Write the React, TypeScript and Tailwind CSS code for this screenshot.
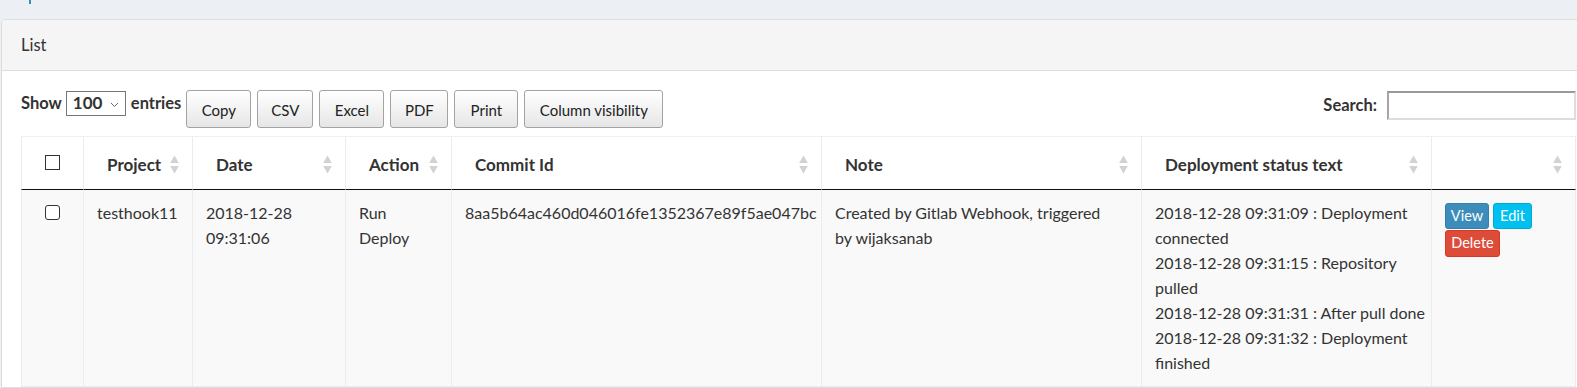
import React from "react";

type Col = { label: string; width: string; sort: boolean };

const COLS: Col[] = [
  { label: "", width: "w-[63px]", sort: false },
  { label: "Project", width: "w-[109px]", sort: true },
  { label: "Date", width: "w-[153px]", sort: true },
  { label: "Action", width: "w-[106px]", sort: true },
  { label: "Commit Id", width: "w-[370px]", sort: true },
  { label: "Note", width: "w-[320px]", sort: true },
  { label: "Deployment status text", width: "w-[290px]", sort: true },
  { label: "", width: "w-[144px]", sort: true },
];

const TOOL_BUTTONS = [
  { label: "Copy", width: "w-[65px]" },
  { label: "CSV", width: "w-[56px]" },
  { label: "Excel", width: "w-[65px]" },
  { label: "PDF", width: "w-[58px]" },
  { label: "Print", width: "w-[64px]" },
  { label: "Column visibility", width: "w-[139px]" },
];

const STATUS_LINES = [
  "2018-12-28 09:31:09 : Deployment",
  "connected",
  "2018-12-28 09:31:15 : Repository",
  "pulled",
  "2018-12-28 09:31:31 : After pull done",
  "2018-12-28 09:31:32 : Deployment",
  "finished",
];

export default function App() {
  return (
    <div className="w-[1577px] h-[388px] overflow-hidden bg-[#ecf0f5] text-[#333] font-['Lato','Noto_Sans',sans-serif]">
      {/* strip above the box, a cut-off link shows at the top */}
      <div className="h-[19px] pl-[29px]">
        <div className="h-[4px] w-[2px] bg-[#3c8dbc]" />
      </div>

      <div className="ml-px w-[1600px] rounded-t-[4px] border border-[#ddd] bg-white">
        <div className="h-[51px] flex items-center px-[19px] pt-px bg-[#f5f5f5] border-b border-[#ddd] rounded-t-[4px] text-[16.5px]">
          List
        </div>

        <div className="pl-[19px] pt-[19px]">
          <div className="w-[1555px] flex items-start justify-between">
            <div className="flex items-start">
              <div className="h-[26px] flex items-center text-[16.5px] font-bold">
                <span>Show</span>
                <div className="ml-[4px] w-[60px] h-[25px] border border-[#767676] flex items-center justify-between pl-[6px] pr-[6px] bg-white">
                  <span className="text-[17px]">100</span>
                  <svg width="9" height="6" viewBox="0 0 9 6" className="mt-[3px]">
                    <path d="M1 1 L4.5 4.5 L8 1" fill="none" stroke="#666" strokeWidth="1" />
                  </svg>
                </div>
                <span className="ml-[5px]">entries</span>
              </div>
              <div className="ml-[5px] flex gap-[6px]">
                {TOOL_BUTTONS.map((b) => (
                  <button
                    key={b.label}
                    className={`${b.width} h-[38px] pt-[2px] rounded-[3px] border border-[#a3a3a3] bg-gradient-to-b from-white to-[#e6e6e6] text-[15px] text-[#222] flex items-center justify-center`}
                  >
                    {b.label}
                  </button>
                ))}
              </div>
            </div>

            <div className="flex items-center pt-px">
              <span className="text-[16.5px] font-bold">Search:</span>
              <input
                className="ml-[10px] w-[189px] h-[29px] border-2 border-t-[#999] border-l-[#a5a5a5] border-r-[#ddd] border-b-[#ddd] bg-white outline-none"
                type="text"
              />
            </div>
          </div>

          <table className="mt-[8px] w-[1555px] table-fixed border-separate border-spacing-0 text-[16px] leading-[25px]">
            <thead>
              <tr>
                {COLS.map((c, i) => (
                  <th
                    key={i}
                    className={`${c.width} border-t border-b border-r border-t-[#f0f0f0] border-r-[#ececec] border-b-[#111] ${
                      i === 0 ? "border-l border-l-[#ececec]" : ""
                    } bg-white pt-[15px] pb-[12px] pl-[23px] pr-[13px] text-left text-[17px] font-bold`}
                  >
                    {i === 0 ? (
                      <div className="flex justify-center pr-[10px]">
                        <span className="mt-[3px] mb-[7px] block w-[16px] h-[15px] border-[1.5px] border-[#333] bg-white" />
                      </div>
                    ) : (
                      <div className="flex items-center justify-between">
                        <span className="whitespace-nowrap">{c.label}</span>
                        <SortIcon />
                      </div>
                    )}
                  </th>
                ))}
              </tr>
            </thead>
            <tbody>
              <tr className="bg-[#f9f9f9] align-top">
                <td className="border-l border-r border-b border-[#ececec] pt-[10px] pb-[11px]">
                  <div className="flex justify-center">
                    <span className="mt-[5px] block w-[15px] h-[15px] rounded-[3px] border-[1.5px] border-[#333] bg-white" />
                  </div>
                </td>
                <Td>testhook11</Td>
                <Td>2018-12-28 09:31:06</Td>
                <Td>Run Deploy</Td>
                <Td>8aa5b64ac460d046016fe1352367e89f5ae047bc</Td>
                <Td>
                  <div className="max-w-[285px]">Created by Gitlab Webhook, triggered by wijaksanab</div>
                </Td>
                <Td>
                  {STATUS_LINES.map((l, i) => (
                    <div key={i} className="whitespace-nowrap">
                      {l}
                    </div>
                  ))}
                </Td>
                <Td>
                  <div className="mt-[3px] flex flex-wrap gap-x-[4px] gap-y-px w-[100px] text-[14.5px] leading-none text-white">
                    <button className="w-[44px] h-[26px] rounded-[3px] border border-[#367fa9] bg-[#3c8dbc]">
                      View
                    </button>
                    <button className="w-[39px] h-[26px] rounded-[3px] border border-[#00acd6] bg-[#00c0ef]">
                      Edit
                    </button>
                    <button className="w-[55px] h-[27px] rounded-[3px] border border-[#d73925] bg-[#dd4b39]">
                      Delete
                    </button>
                  </div>
                </Td>
              </tr>
            </tbody>
          </table>
        </div>
      </div>
    </div>
  );
}

function Td({ children }: { children: React.ReactNode }) {
  return (
    <td className="border-r border-b border-[#ececec] pt-[10px] pb-[11px] pl-[13px] pr-[13px]">
      {children}
    </td>
  );
}

function SortIcon() {
  return (
    <svg width="9" height="19" viewBox="0 0 9 19" className="shrink-0">
      <path d="M4.5 0.5 L8.8 8 L0.2 8 Z" fill="#d2d2d2" />
      <path d="M0.2 11 L8.8 11 L4.5 18.5 Z" fill="#d2d2d2" />
    </svg>
  );
}
